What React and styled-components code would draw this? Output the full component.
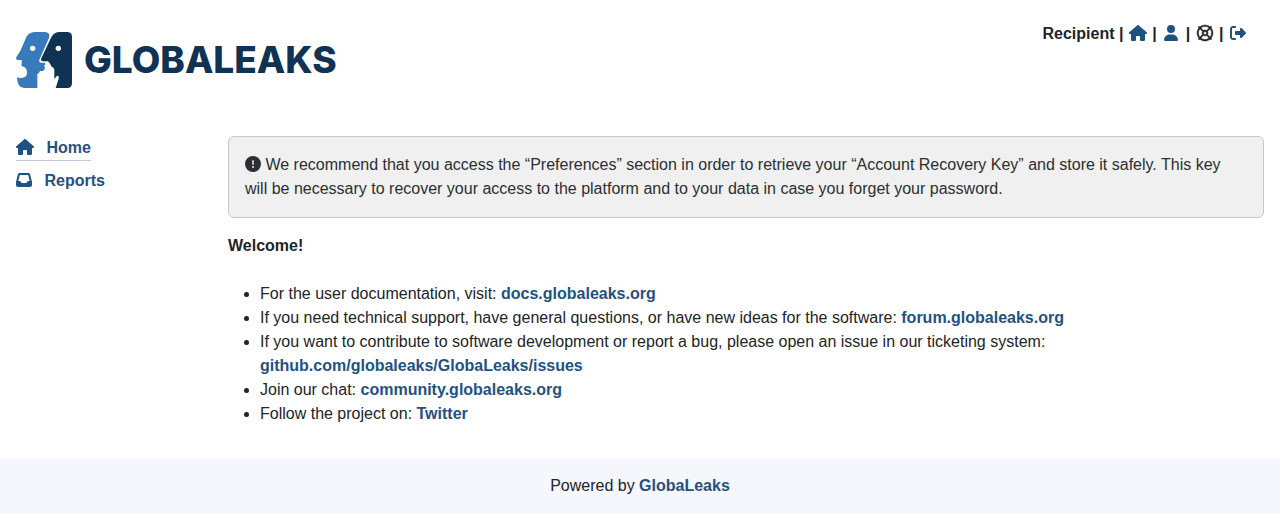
import React from "react";
import styled, { createGlobalStyle } from "styled-components";
import {
  FaHouse,
  FaUser,
  FaRegLifeRing,
  FaRightFromBracket,
  FaInbox,
  FaCircleExclamation,
} from "react-icons/fa6";

const GlobalStyle = createGlobalStyle`
  *, *::before, *::after { box-sizing: border-box; }
  body {
    margin: 0;
    background: #fff;
    color: #212529;
    font: 400 16px/24px "Liberation Sans", Arial, sans-serif;
  }
`;

const Link = styled.a`
  color: #1f5282;
  font-weight: 700;
  text-decoration: none;
`;

const HomeIcon = styled(FaHouse)`
  width: 18px;
  height: 16px;
`;

const Header = styled.header`
  display: flex;
  justify-content: space-between;
  align-items: flex-start;
  padding: 32px 32px 48px 16px;
`;

const Brand = styled.a`
  display: flex;
  align-items: center;
  gap: 12px;
  color: #103253;
  text-decoration: none;
`;

const LogoMark = styled.svg`
  display: block;
  width: 56px;
  height: 56px;
`;

const BrandName = styled.span`
  font: 800 37px/56px Inter, sans-serif;
`;

const UserBar = styled.nav`
  margin-top: -10px;
  font-weight: 700;

  svg {
    vertical-align: -2px;
  }
`;

const IconLink = styled(Link)`
  display: inline-block;
  width: 20px;
  text-align: center;
`;

const IconButton = styled.button`
  width: 20px;
  padding: 0;
  border: 0;
  background: none;
  color: #212529;
  font: inherit;
  cursor: pointer;
`;

const SupportIcon = styled(FaRegLifeRing)`
  overflow: visible;
  stroke: currentColor;
  stroke-width: 14px;
`;

const Body = styled.div`
  display: flex;
  gap: 16px;
  padding: 0 16px 32px;
`;

const Sidebar = styled.nav`
  flex: 0 0 196px;
  display: flex;
  flex-direction: column;
  align-items: flex-start;
  gap: 8px;
`;

const SideLink = styled(Link)`
  border-bottom: 1px solid ${(p) => (p.$active ? "#c3cbdf" : "transparent")};

  svg {
    margin-right: 8px;
    vertical-align: -2px;
  }
`;

const Main = styled.main`
  flex: 1;
  min-width: 0;
`;

const Notice = styled.div`
  padding: 16px;
  border: 1px solid #c4c8cb;
  border-radius: 6px;
  background: #f0f0f0;
  color: #2b2f32;

  svg {
    vertical-align: -2px;
  }
`;

const Welcome = styled.p`
  margin: 16px 0 24px;
  font-weight: 700;
`;

const List = styled.ul`
  margin: 0;
  padding-left: 32px;
`;

const Footer = styled.footer`
  padding: 16px;
  background: #f6f7fc;
  text-align: center;
`;

export default function App() {
  return (
    <>
      <GlobalStyle />
      <Header>
        <Brand href="#home">
          <LogoMark viewBox="0 0 168 168" aria-hidden="true">
            <path
              fill="#377bbc"
              d="M56 0H88Q104 3 99 18L70 83Q68 91 74 92H86Q90 97 84 102L87 106Q87 114 80 117L72 117Q70 124 64 126V168H24Q8 166 5 150Q3 142 4 136Q14 141 25 136Q34 132 33 119Q32 107 19 103Q15 101 17 96V84H6Q-2 83 1 76L14 55L31 15Q38 2 56 0Z"
            />
            <path
              fill="#103253"
              d="M129 0H155Q168 1 168 14V154Q168 168 154 168H119L128 140Q130 130 123 131L115 141V113Q114 105 107 104Q102 93 96 88H80Q73 86 76 79L105 17Q112 2 129 0Z"
            />
            <circle cx="50" cy="49" r="8" fill="#fff" />
            <circle cx="127" cy="49" r="8" fill="#fff" />
          </LogoMark>
          <BrandName>GLOBALEAKS</BrandName>
        </Brand>
        <UserBar aria-label="Account">
          Recipient |{" "}
          <IconLink href="#home" aria-label="Home"><HomeIcon /></IconLink> |{" "}
          <IconLink href="#preferences" aria-label="Preferences"><FaUser /></IconLink> |{" "}
          <IconButton type="button" aria-label="Support"><SupportIcon /></IconButton> |{" "}
          <IconLink href="#logout" aria-label="Log out"><FaRightFromBracket /></IconLink>
        </UserBar>
      </Header>
      <Body>
        <Sidebar aria-label="Main">
          <SideLink href="#home" $active><HomeIcon /> Home</SideLink>
          <SideLink href="#reports"><FaInbox /> Reports</SideLink>
        </Sidebar>
        <Main>
          <Notice role="alert">
            <FaCircleExclamation /> We recommend that you access the “Preferences” section in order to retrieve your “Account Recovery Key” and store it safely. This key will be necessary to recover your access to the platform and to your data in case you forget your password.
          </Notice>
          <Welcome>Welcome!</Welcome>
          <List>
            <li>For the user documentation, visit: <Link href="#docs">docs.globaleaks.org</Link></li>
            <li>If you need technical support, have general questions, or have new ideas for the software: <Link href="#forum">forum.globaleaks.org</Link></li>
            <li>If you want to contribute to software development or report a bug, please open an issue in our ticketing system: <Link href="#issues">github.com/globaleaks/GlobaLeaks/issues</Link></li>
            <li>Join our chat: <Link href="#community">community.globaleaks.org</Link></li>
            <li>Follow the project on: <Link href="#twitter">Twitter</Link></li>
          </List>
        </Main>
      </Body>
      <Footer>Powered by <Link href="#globaleaks">GlobaLeaks</Link></Footer>
    </>
  );
}
